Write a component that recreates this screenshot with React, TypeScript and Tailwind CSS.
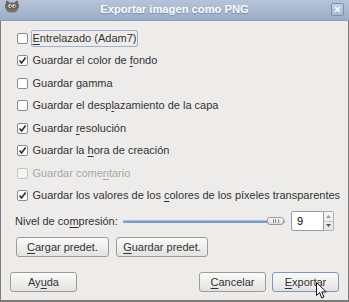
import React from "react";

function Check({ checked, disabled }: { checked?: boolean; disabled?: boolean }) {
  return (
    <div
      className={`w-[11px] h-[11px] shrink-0 rounded-[2px] border flex items-center justify-center ${
        disabled ? "border-[#c4c3c1] bg-[#f4f4f3]" : "border-[#8c8b89] bg-white"
      }`}
    >
      {checked && (
        <svg width="9" height="9" viewBox="0 0 9 9">
          <path d="M1.5 4.5 L3.6 7 L7.6 1.6" fill="none" stroke="#2a2a2a" strokeWidth="1.6" />
        </svg>
      )}
    </div>
  );
}

function Row({
  checked,
  disabled,
  focus,
  children,
}: {
  checked?: boolean;
  disabled?: boolean;
  focus?: boolean;
  children: React.ReactNode;
}) {
  return (
    <div className="h-[22.5px] flex items-center pl-[1.5px]">
      <Check checked={checked} disabled={disabled} />
      <span
        className={`ml-[3px] px-[1px] h-[17px] leading-[15px] inline-block whitespace-nowrap rounded-[2px] border ${
          focus ? "border-[#9fb2cc]" : "border-transparent"
        } ${disabled ? "text-[#a9a8a6]" : ""}`}
      >
        {children}
      </span>
    </div>
  );
}

function Btn({ children, w, def }: { children: React.ReactNode; w: string; def?: boolean }) {
  return (
    <div
      className={`${w} h-[20px] rounded-[3px] border flex items-center justify-center whitespace-pre bg-linear-to-b from-[#fbfbfa] to-[#e3e2e0] ${
        def ? "border-[#7d96bd]" : "border-[#9c9b99]"
      }`}
    >
      <span>{children}</span>
    </div>
  );
}

const U = ({ children }: { children: React.ReactNode }) => <span className="underline underline-offset-[2px]">{children}</span>;

export default function App() {
  return (
    <div className="w-[349px] h-[302px] flex flex-col bg-[#edeceb] text-[11px] text-[#333] font-['Liberation_Sans',Arial,sans-serif] relative overflow-hidden">
      {/* title bar */}
      <div className="h-[21px] shrink-0 flex items-center relative bg-linear-to-b from-[#b6c4d9] to-[#9badc8] border-b border-[#8a9cb8]">
        <svg className="absolute left-[3px] top-[0px]" width="18" height="14" viewBox="0 0 18 14">
          <path d="M3 3 Q2 0 5 1 L7 3 Q9 1.5 11 3 L13 1 Q16 0 15 3 Q17 6 15 9 Q13 13 9 12.5 Q4 13 3 9 Q1 6 3 3 Z" fill="#6b6660" />
          <path d="M4 9 Q9 12 14 9 L13 11 Q9 13 5 11 Z" fill="#8a7a55" />
          <circle cx="7" cy="6" r="1.7" fill="#fff" />
          <circle cx="11" cy="6" r="1.7" fill="#fff" />
          <circle cx="7.3" cy="6.2" r="0.8" fill="#000" />
          <circle cx="11.3" cy="6.2" r="0.8" fill="#000" />
        </svg>
        <div className="flex-1 text-center font-bold text-white text-[11.2px] [text-shadow:0_1px_1px_#7488a8] pb-[2px]">
          Exportar imagen como PNG
        </div>
        <div className="absolute right-[5px] top-[3px] w-[13px] h-[13px] rounded-[2px] border border-[#7e91b1] bg-linear-to-b from-[#c6d2e4] to-[#a6b7d0] flex items-center justify-center">
          <svg width="7" height="7" viewBox="0 0 7 7">
            <path d="M1 1 L6 6 M6 1 L1 6" stroke="#fff" strokeWidth="1.6" />
          </svg>
        </div>
      </div>

      {/* body */}
      <div className="flex-1 flex flex-col border-x border-b-2 border-[#7c7b79]">
        <div className="px-[14px] pt-[6px] flex flex-col">
          <Row focus>
            <U>E</U>ntrelazado (Adam7)
          </Row>
          <Row checked>
            Guardar el color de <U>f</U>ondo
          </Row>
          <Row>Guardar gamma</Row>
          <Row>
            Guardar el desp<U>l</U>azamiento de la capa
          </Row>
          <Row checked>
            Guardar <U>r</U>esolución
          </Row>
          <Row checked>
            Guardar la <U>h</U>ora de creación
          </Row>
          <Row disabled>
            Guardar come<U>n</U>tario
          </Row>
          <Row checked>
            Guardar los valores de los <U>c</U>olores de los píxeles transparentes
          </Row>

          <div className="mt-[3px] h-[22px] flex items-center">
            <span className="pr-[5px] whitespace-nowrap">
              Nivel de co<U>m</U>presión:
            </span>
            <div className="flex-1 h-[10px] relative flex items-center">
              <div className="w-full h-[3px] rounded-full bg-[#7f9dcc] border-t border-[#a9bfe0]" />
              <div className="absolute right-[1px] top-[1px] w-[17px] h-[8px] rounded-[3px] border border-[#9a9997] bg-linear-to-b from-[#fbfbfa] to-[#dcdbd9] flex items-center justify-center gap-[1.5px]">
                <div className="w-[1px] h-[4px] bg-[#8c8b89]" />
                <div className="w-[1px] h-[4px] bg-[#8c8b89]" />
                <div className="w-[1px] h-[4px] bg-[#8c8b89]" />
              </div>
            </div>
            <div className="ml-[6px] h-[20px] flex">
              <div className="w-[33px] h-full bg-white border border-[#9c9b99] rounded-l-[2px] flex items-center pl-[5px] text-black">
                9
              </div>
              <div className="w-[10px] h-full border border-l-0 border-[#b3b2b0] rounded-r-[2px] flex flex-col bg-linear-to-b from-[#f7f7f6] to-[#e6e5e3]">
                <div className="flex-1 flex items-center justify-center border-b border-[#c9c8c6]">
                  <svg width="5" height="3" viewBox="0 0 5 3">
                    <path d="M0 3 L2.5 0 L5 3 Z" fill="#9c9b99" />
                  </svg>
                </div>
                <div className="flex-1 flex items-center justify-center">
                  <svg width="5" height="3" viewBox="0 0 5 3">
                    <path d="M0 0 L2.5 3 L5 0 Z" fill="#555" />
                  </svg>
                </div>
              </div>
            </div>
          </div>

          <div className="mt-[5px] flex gap-[7px] pl-[1px]">
            <Btn w="w-[93px]">
              <U>C</U>argar predet.
            </Btn>
            <Btn w="w-[92px]">
              <U>G</U>uardar predet.
            </Btn>
          </div>
        </div>

        <div className="mt-[15px] px-[9px] flex items-center">
          <Btn w="w-[67px]">
            Ay<U>u</U>da
          </Btn>
          <div className="flex-1" />
          <div className="flex gap-[6px]">
            <Btn w="w-[67px]">
              <U>C</U>ancelar
            </Btn>
            <Btn w="w-[67px]" def>
              <U>E</U>xportar
            </Btn>
          </div>
        </div>
      </div>

      {/* mouse pointer */}
      <svg className="absolute left-[316px] top-[282px]" width="12" height="18" viewBox="0 0 12 18">
        <path
          d="M0.5 0.5 L0.5 13.5 L3.6 10.6 L5.8 16 L8 15 L5.8 9.9 L10.2 9.9 Z"
          fill="#fff"
          stroke="#111"
          strokeWidth="1"
          strokeLinejoin="round"
        />
      </svg>
    </div>
  );
}
